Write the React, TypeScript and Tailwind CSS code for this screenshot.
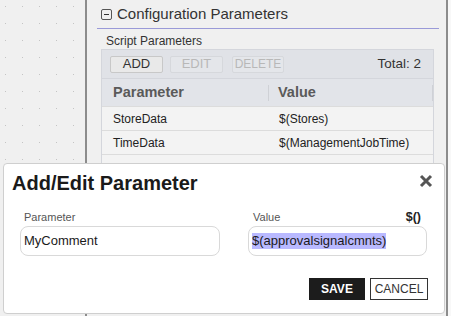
import React from "react";

export default function App() {
  const font = { fontFamily: '"Liberation Sans", Arial, sans-serif' };
  return (
    <div
      className="relative w-[451px] h-[316px] overflow-hidden bg-[#f0f0f0] flex"
      style={font}
    >
      {/* left dotted canvas */}
      <div className="w-[85px] h-full bg-[radial-gradient(circle,#c4c4c4_0.8px,transparent_1px)] bg-[size:17px_17px] bg-[position:-3px_-2px]" />
      <div className="w-[2px] h-full bg-[#8c8c8c]" />
      {/* main panel */}
      <div className="w-[359px] h-full flex flex-col">
        <div className="flex items-center h-[28px] pl-[14px] pt-[1px]">
          <div className="w-[11px] h-[11px] border border-[#555] rounded-[2px] flex items-center justify-center">
            <div className="w-[5px] h-[1.5px] bg-[#333]" />
          </div>
          <span className="ml-[5px] text-[15px] text-[#333]">Configuration Parameters</span>
        </div>
        <div className="ml-[10px] mr-[7px] h-[1px] bg-[#9a9ad8]" />
        <div className="pl-[19px] pt-[5px] text-[12px] text-[#333] leading-[14px]">Script Parameters</div>
        <div className="ml-[14px] mt-[1px] w-[333px] border border-[#d4d6dc] bg-[#f3f3f3]">
          <div className="h-[28px] bg-[#e0e2e7] flex items-center pl-[8px] pr-[12px]">
            <div className="w-[53px] h-[17px] bg-[#e9e9e9] border border-[#c8c8c8] rounded-[2px] text-[13px] text-[#333] flex items-center justify-center">ADD</div>
            <div className="ml-[7px] w-[53px] h-[17px] bg-[#e4e6ea] border border-[#d6d8dc] rounded-[2px] text-[13px] text-[#b8b8b8] flex items-center justify-center">EDIT</div>
            <div className="ml-[9px] w-[52px] h-[17px] bg-[#e4e6ea] border border-[#d6d8dc] rounded-[2px] text-[12px] text-[#b8b8b8] flex items-center justify-center">DELETE</div>
            <div className="ml-auto text-[13.5px] text-[#333]">Total: 2</div>
          </div>
          <div className="h-[28px] bg-[#e2e4e9] border-t border-[#d4d6dc] flex items-center text-[14.5px] font-bold text-[#5a5a5a]">
            <div className="w-[167px] pl-[11px] border-r border-[#cfd1d6] h-[16px] flex items-center">Parameter</div>
            <div className="pl-[9px] flex-1 border-r border-[#cfd1d6] h-[16px] flex items-center">Value</div>
          </div>
          <div className="h-[24px] border-t border-[#dcdcdc] flex items-center text-[12px] text-[#222]">
            <div className="w-[167px] pl-[11px]">StoreData</div>
            <div className="pl-[10px]">$(Stores)</div>
          </div>
          <div className="h-[24px] border-t border-[#dcdcdc] flex items-center text-[12px] text-[#222]">
            <div className="w-[167px] pl-[11px]">TimeData</div>
            <div className="pl-[10px]">$(ManagementJobTime)</div>
          </div>
          <div className="h-[24px] border-t border-[#dcdcdc]" />
        </div>
      </div>
      <div className="w-[2px] h-full bg-[#8c8c8c]" />
      <div className="flex-1 h-full bg-[#f8f8f8]" />

      {/* dialog */}
      <div className="absolute left-[3px] top-[163px] w-[442px] h-[151px] bg-white border border-[#cfcfcf] rounded-[4px]">
        <div className="flex items-start justify-between pl-[8px] pr-[11px] pt-[7px]">
          <div className="text-[20px] font-bold text-[#1a1a1a] leading-[24px]">Add/Edit Parameter</div>
          <svg width="14" height="14" viewBox="0 0 14 14" className="mt-[3px]">
            <path d="M2 2 L12 12 M12 2 L2 12" stroke="#555" strokeWidth="3" strokeLinecap="butt" />
          </svg>
        </div>
        <div className="flex pl-[16px] mt-[16px]">
          <div className="w-[200px] flex flex-col">
            <div className="pl-[4px] text-[11px] text-[#555] leading-[13px]">Parameter</div>
            <div className="mt-[2px] h-[30px] border border-[#d9d9d9] rounded-[8px] flex items-center pl-[3px] text-[13px] text-[#1a1a1a]">MyComment</div>
          </div>
          <div className="ml-[28px] w-[179px] flex flex-col">
            <div className="flex justify-between pl-[5px] pr-[6px] leading-[13px]">
              <span className="text-[11px] text-[#555]">Value</span>
              <span className="text-[12.5px] font-bold text-[#222]">$()</span>
            </div>
            <div className="mt-[2px] h-[30px] border border-[#d9d9d9] rounded-[8px] flex items-center pl-[3px] text-[13px] text-[#1a1a1a]">
              <span className="bg-[#b9b9ff] leading-[16px]">$(approvalsignalcmnts)</span>
            </div>
          </div>
        </div>
        <div className="flex justify-end pr-[16px] mt-[22px] gap-[5px]">
          <div className="w-[56px] h-[22px] bg-[#1c1c1c] text-white text-[12px] font-bold flex items-center justify-center">SAVE</div>
          <div className="w-[58px] h-[22px] bg-white border border-[#333] text-[#333] text-[12px] flex items-center justify-center">CANCEL</div>
        </div>
      </div>
    </div>
  );
}
